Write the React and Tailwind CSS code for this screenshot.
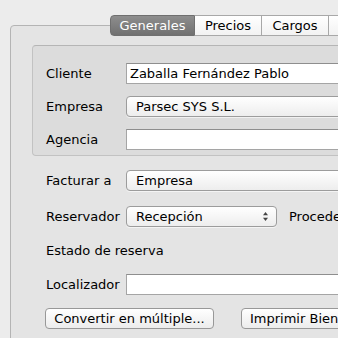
import React from 'react';

const font = { fontFamily: '"DejaVu Sans", "Liberation Sans", sans-serif' };

const Field = ({ value = '', className = '' }) => (
  <div className={`h-[21px] bg-white border border-[#a5a5a5] border-t-[#8e8e8e] pl-[3px] flex items-center text-[13px] text-black whitespace-nowrap ${className}`}>
    {value}
  </div>
);

const Popup = ({ value, className = '', arrows = false }) => (
  <div className={`h-[21px] rounded-[4px] border border-[#9c9c9c] bg-gradient-to-b from-white to-[#ededed] shadow-[0_1px_0_rgba(255,255,255,0.6)] pl-[9px] pr-[7px] flex items-center justify-between text-[13px] text-black whitespace-nowrap ${className}`}>
    <span>{value}</span>
    {arrows && (
      <svg width="7" height="11" viewBox="0 0 7 11">
        <path d="M3.5 1 L6 4.2 L1 4.2 Z" fill="#444" />
        <path d="M3.5 10 L6 6.8 L1 6.8 Z" fill="#444" />
      </svg>
    )}
  </div>
);

const Row = ({ label, children, className = '' }) => (
  <div className={`flex items-center ${className}`}>
    <span className="w-[80px] shrink-0 text-[13px] text-black whitespace-nowrap">{label}</span>
    {children}
  </div>
);

const Button = ({ label, className = '' }) => (
  <div className={`h-[21px] rounded-[4px] border border-[#989898] bg-gradient-to-b from-white to-[#ececec] flex items-center justify-center text-[13px] text-black whitespace-nowrap ${className}`}>
    {label}
  </div>
);

export default function App() {
  return (
    <div className="w-[338px] h-[338px] overflow-hidden bg-[#ececec] pl-[10px] pt-[25px]" style={font}>
      <div className="w-[420px] h-[340px] rounded-tl-[4px] border border-[#b4b4b4] bg-[#e4e4e4]">
        {/* tabs */}
        <div className="flex ml-[99px] -mt-[11px] h-[21px] text-[13px]">
          <div className="w-[85px] rounded-l-[4px] border border-[#6f6f6f] bg-gradient-to-b from-[#8e8e8e] to-[#707070] text-white flex items-center justify-center">
            Generales
          </div>
          <div className="w-[67px] border-y border-r border-[#a8a8a8] bg-gradient-to-b from-white to-[#f2f2f2] text-black flex items-center justify-center">
            Precios
          </div>
          <div className="w-[67px] border-y border-r border-[#a8a8a8] bg-gradient-to-b from-white to-[#f2f2f2] text-black flex items-center justify-center">
            Cargos
          </div>
          <div className="w-[60px] border-y border-[#a8a8a8] bg-gradient-to-b from-white to-[#f2f2f2]" />
        </div>

        {/* group box */}
        <div className="ml-[21px] mt-[9px] w-[380px] rounded-[4px] border border-[#c2c2c2] border-t-[#b5b5b5] bg-[#dcdcdc] pl-[13px] pt-[17px] pb-[5px] flex flex-col gap-[12px]">
          <Row label="Cliente">
            <Field value="Zaballa Fernández Pablo" className="w-[260px]" />
          </Row>
          <Row label="Empresa">
            <Popup value="Parsec SYS S.L." className="w-[260px]" />
          </Row>
          <Row label="Agencia">
            <Field className="w-[260px]" />
          </Row>
        </div>

        <div className="ml-[35px] mt-[14px] flex flex-col">
          <Row label="Facturar a">
            <Popup value="Empresa" className="w-[260px]" />
          </Row>
          <Row label="Reservador" className="mt-[15px]">
            <Popup value="Recepción" arrows className="w-[151px]" />
            <span className="ml-[12px] text-[13px] text-black whitespace-nowrap">Procedencia</span>
          </Row>
          <div className="mt-[13px] h-[21px] flex items-center text-[13px] text-black">Estado de reserva</div>
          <Row label="Localizador" className="mt-[13px]">
            <Field className="w-[260px]" />
          </Row>
          <div className="mt-[13px] flex">
            <Button label="Convertir en múltiple..." className="w-[169px] -ml-[1px]" />
            <Button label="Imprimir Bienvenida" className="w-[150px] ml-[27px]" />
          </div>
        </div>
      </div>
    </div>
  );
}
